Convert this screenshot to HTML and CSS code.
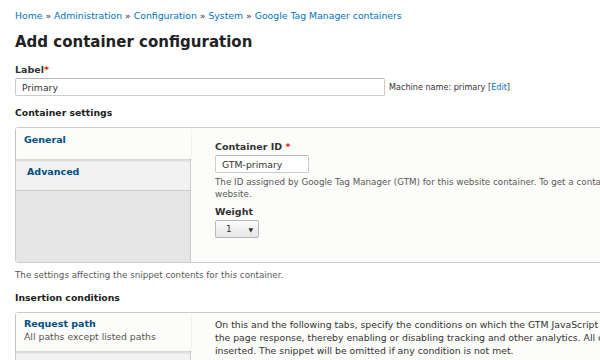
FILE: index.html
```html
<!DOCTYPE html>
<html lang="en">
<head>
  <meta charset="UTF-8">
  <title>Add container configuration</title>
  <link rel="stylesheet" href="styles.css">
</head>
<body>
<div class="page">
  <div class="breadcrumb">
    <a href="#">Home</a> » <a href="#">Administration</a> » <a href="#">Configuration</a> » <a href="#">System</a> » <a href="#">Google Tag Manager containers</a>
  </div>
  <h1>Add container configuration</h1>

  <div class="form-item top-item">
    <label class="label">Label<span class="req">*</span></label>
    <div class="inline">
      <input class="text wide" type="text" value="Primary">
      <span class="machine">Machine name: primary [<a href="#">Edit</a>]</span>
    </div>
  </div>

  <h2>Container settings</h2>
  <div class="vtabs">
    <ul class="vtabs-menu">
      <li class="tab active"><a href="#">General</a></li>
      <li class="tab"><a href="#">Advanced</a></li>
    </ul>
    <div class="vtabs-pane">
      <div class="form-item">
        <label class="label">Container ID <span class="req">*</span></label>
        <input class="text narrow" type="text" value="GTM-primary">
        <div class="desc">The ID assigned by Google Tag Manager (GTM) for this website container. To get a container ID, sign up for GTM and create a container for your website.</div>
      </div>
      <div class="form-item">
        <label class="label">Weight</label>
        <div class="select">1<span class="arrow">▼</span></div>
      </div>
    </div>
  </div>
  <div class="desc outer">The settings affecting the snippet contents for this container.</div>

  <h2>Insertion conditions</h2>
  <div class="vtabs">
    <ul class="vtabs-menu">
      <li class="tab active tall"><a href="#">Request path</a><span class="summary">All paths except listed paths</span></li>
      <li class="tab"><a href="#">Role</a></li>
    </ul>
    <div class="vtabs-pane">
      <p class="text-block">On this and the following tabs, specify the conditions on which the GTM JavaScript snippet will either be inserted on or omitted from the page response, thereby enabling or disabling tracking and other analytics. All conditions must be satisfied for the snippet to be inserted. The snippet will be omitted if any condition is not met.</p>
    </div>
  </div>
</div>
</body>
</html>
```

FILE: styles.css
```css
html {
  overflow: hidden;
}
body {
  margin: 0;
  background: #fff;
  color: #333;
  font-family: "DejaVu Sans", Verdana, sans-serif;
  font-size: 9px;
}
a {
  color: #0074bd;
  text-decoration: none;
}
.page {
  width: 848px;
  padding: 10px 15px;
}
.breadcrumb {
  font-size: 9.3px;
  color: #333;
  line-height: 12px;
}
h1 {
  margin: 10px 0 12px;
  font-size: 15px;
  line-height: 20px;
  color: #222;
}
h2 {
  margin: 0 0 8px;
  font-size: 9.3px;
  line-height: 12px;
  color: #222;
}
.form-item {
  margin-bottom: 6px;
}
.top-item {
  margin-bottom: 11px;
}
.label {
  display: block;
  margin-bottom: 2px;
  font-weight: bold;
  font-size: 9.5px;
  line-height: 12px;
  color: #333;
}
.top-item .label {
  margin-top: 1px;
}
.req {
  color: #e32700;
}
.inline {
  display: flex;
  align-items: center;
  gap: 4px;
}
.text {
  box-sizing: border-box;
  height: 18px;
  border: 1px solid #ccc;
  border-top-color: #b9b9b9;
  border-radius: 2px;
  padding: 0 6px;
  font: 9.3px "DejaVu Sans", sans-serif;
  color: #333;
}
.wide {
  width: 370px;
}
.narrow {
  width: 94px;
}
.machine {
  font-size: 8.1px;
  color: #333;
}
.vtabs {
  display: flex;
  border: 1px solid #ccc;
  border-radius: 3px;
  background: #fcfcfa;
  margin-bottom: 6px;
}
.vtabs-menu {
  list-style: none;
  margin: 0;
  padding: 0;
  width: 174px;
  flex: none;
  background: #e6e6e6;
  border-right: 1px solid #ccc;
}
.tab {
  box-sizing: border-box;
  height: 32px;
  padding: 6px 11px;
  background: #f2f2f2;
  border-bottom: 1px solid #ccc;
}
.tab a {
  display: block;
  font-weight: bold;
  font-size: 9.5px;
  line-height: 13px;
  color: #004f80;
}
.tab.active {
  height: auto;
  min-height: 31px;
  padding: 5px 8px 7px;
  background: #fcfcfa;
  margin-right: -1px;
  border-bottom: none;
  box-shadow: 0 2px 2px rgba(0, 0, 0, 0.12);
  position: relative;
}
.tab.tall {
  padding: 4px 8px 8px;
}
.tall + .tab {
  padding-top: 10px;
}
.summary {
  display: block;
  font-size: 9.3px;
  line-height: 13px;
  color: #555;
}
.vtabs-pane {
  flex: 1;
  padding: 5px 24px 18px;
}
.vtabs-pane .form-item:first-child {
  margin-top: 8px;
}
.vtabs-pane .desc {
  margin-right: -30px;
}
.desc {
  margin-top: 3px;
  font-size: 8.75px;
  line-height: 12px;
  color: #595959;
}
.outer {
  margin: 0 0 11px;
}
.select {
  box-sizing: border-box;
  width: 44px;
  height: 18px;
  border: 1px solid #b8b8b8;
  border-radius: 2px;
  background: linear-gradient(#fcfcfc, #e6e6e6);
  padding: 0 5px 0 10px;
  display: flex;
  align-items: center;
  justify-content: space-between;
  font-size: 9px;
}
.arrow {
  font-size: 6px;
  color: #333;
}
.text-block {
  margin: 0;
  font-size: 9.3px;
  line-height: 13px;
}
```
